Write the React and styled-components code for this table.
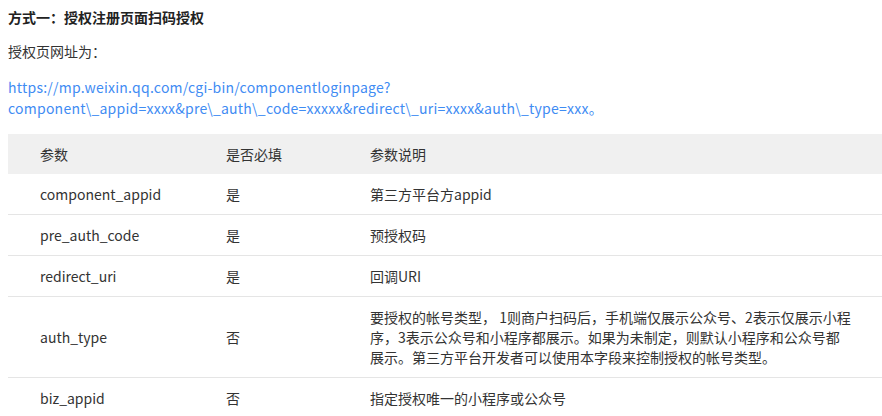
import styled, { createGlobalStyle } from 'styled-components'

const GlobalStyle = createGlobalStyle`
  body {
    margin: 0;
    background: #fff;
    font-family: "Noto Sans CJK SC", "Noto Sans", sans-serif;
    color: #333;
  }
`

const Page = styled.div`
  padding: 7px 0 0 8px;
  font-size: 14px;
  line-height: 21px;
`

const Title = styled.h3`
  margin: 0 0 13px;
  font-size: 14px;
  line-height: 21px;
  font-weight: bold;
  color: #222;
`

const Para = styled.p`
  margin: 0 0 15px;
`

const UrlLink = styled.a`
  display: block;
  margin: 0 0 15px;
  color: #3f8cf3;
  letter-spacing: 0.24px;
  text-decoration: none;
  word-break: break-all;
`

const Table = styled.table`
  width: 874px;
  border-collapse: collapse;
  table-layout: fixed;
`

const Th = styled.th`
  background: #f0f0f0;
  font-weight: normal;
  text-align: left;
  padding: 10px 32px;
  line-height: 20px;
  color: #333;
`

const Row = styled.tr`
  border-bottom: 1px solid #e5e5e5;
  &:last-child {
    border-bottom: none;
  }
`

const Td = styled.td`
  padding: 10px 28.5px 10px 32px;
  line-height: 20px;
  vertical-align: middle;
`

const rows = [
  ['component_appid', '是', '第三方平台方appid'],
  ['pre_auth_code', '是', '预授权码'],
  ['redirect_uri', '是', '回调URI'],
  [
    'auth_type',
    '否',
    '要授权的帐号类型， 1则商户扫码后，手机端仅展示公众号、2表示仅展示小程序，3表示公众号和小程序都展示。如果为未制定，则默认小程序和公众号都展示。第三方平台开发者可以使用本字段来控制授权的帐号类型。',
  ],
  ['biz_appid', '否', '指定授权唯一的小程序或公众号'],
]

export default function App() {
  return (
    <Page>
      <GlobalStyle />
      <Title>方式一：授权注册页面扫码授权</Title>
      <Para>授权页网址为：</Para>
      <UrlLink href="#">
        https://mp.weixin.qq.com/cgi-bin/componentloginpage?
        <br />
        component\_appid=xxxx&amp;pre\_auth\_code=xxxxx&amp;redirect\_uri=xxxx&amp;auth\_type=xxx。
      </UrlLink>
      <Table>
        <colgroup>
          <col style={{ width: 186 }} />
          <col style={{ width: 144 }} />
          <col />
        </colgroup>
        <thead>
          <tr>
            <Th>参数</Th>
            <Th>是否必填</Th>
            <Th>参数说明</Th>
          </tr>
        </thead>
        <tbody>
          {rows.map((r) => (
            <Row key={r[0]}>
              <Td>{r[0]}</Td>
              <Td>{r[1]}</Td>
              <Td>{r[2]}</Td>
            </Row>
          ))}
        </tbody>
      </Table>
    </Page>
  )
}
